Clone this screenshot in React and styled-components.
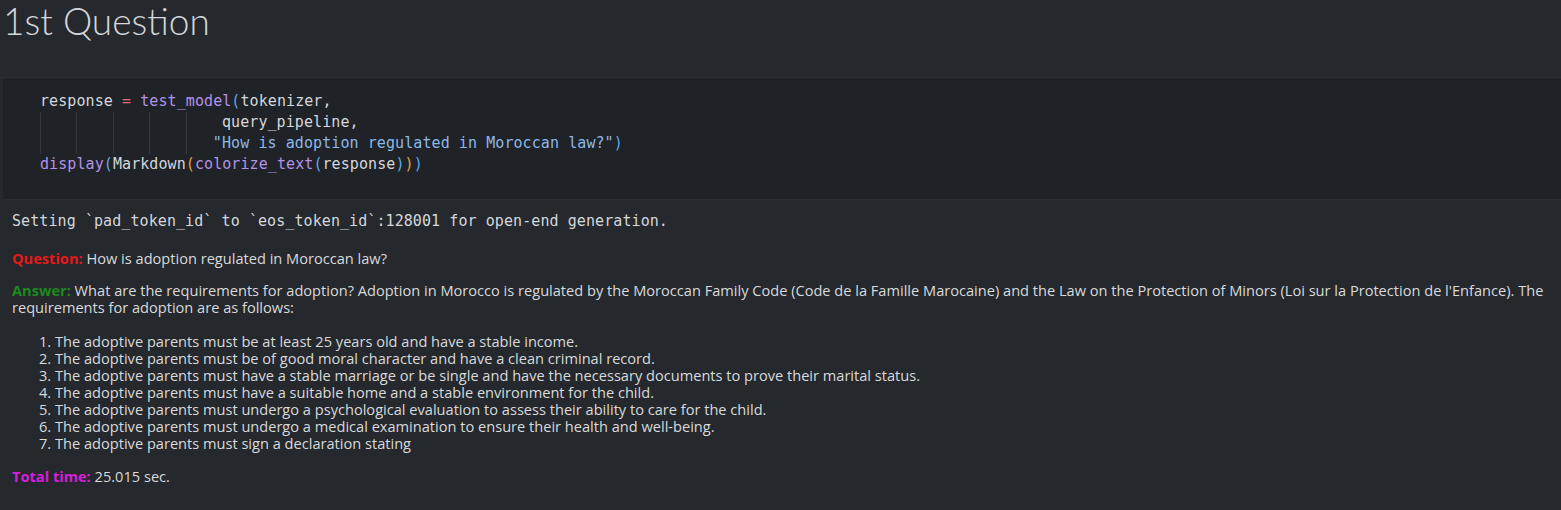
import React from 'react'
import styled, { createGlobalStyle } from 'styled-components';

const GlobalStyle = createGlobalStyle`
    html, body {
        margin: 0;
        padding: 0;
        background-color: #25282c;
    }
    * {
        box-sizing: border-box;
    }
`
const Wrapper = styled.div`
    width: 1561px;
    height: 510px;
    overflow: hidden;
    background-color: #25282c;
    font-family: "Open Sans", Lato, sans-serif;
`
const Header = styled.div`
    height: 78px;
    padding: 2px 0 0 3px;
    border-bottom: 1px solid #2b2e32;
`
const Title = styled.h1`
    margin: 0;
    font-family: Lato, sans-serif;
    font-size: 37px;
    font-weight: 300;
    line-height: 38px;
    color: #d3d6da;
`
const CodeCell = styled.div`
    margin-left: 3px;
    height: 122px;
    padding: 13px 0 0 37px;
    background-color: #1f2226;
    border-bottom: 1px solid #2b2e32;
    font-family: "DejaVu Sans Mono", monospace;
    font-size: 15px;
    letter-spacing: 0.08px;
    color: #d4d7dc;
`
const CodeLine = styled.div`
    display: flex;
    height: 21px;
    line-height: 21px;
    white-space: pre;
`
const Guide = styled.span`
    display: inline-block;
    width: ${p => p.w}px;
    height: 21px;
    border-left: 1px solid #34373c;
`
const Tok = styled.span`
    color: ${p => p.c || '#d4d7dc'};
`
const Output = styled.div`
    padding: 11px 0 0 12px;
    color: #d8dadd;
`
const Stream = styled.div`
    font-family: "DejaVu Sans Mono", monospace;
    font-size: 15px;
    letter-spacing: 0.08px;
    line-height: 20px;
    color: #d4d7dc;
    white-space: pre;
`
const Para = styled.p`
    margin: ${p => p.top}px 0 0 0;
    font-size: 14.6px;
    line-height: 17px;
`
const Label = styled.span`
    font-weight: 700;
    color: ${p => p.c};
`
const List = styled.ol`
    margin: 17px 0 0 0;
    padding-left: 43px;
    font-size: 14.6px;
    line-height: 17px;
`

const c = {
    op: '#e5707a',
    fn: '#b392e8',
    b1: '#5ea8e8',
    b2: '#e0a040',
    str: '#8cb8e8',
}

const items = [
    'The adoptive parents must be at least 25 years old and have a stable income.',
    'The adoptive parents must be of good moral character and have a clean criminal record.',
    'The adoptive parents must have a stable marriage or be single and have the necessary documents to prove their marital status.',
    'The adoptive parents must have a suitable home and a stable environment for the child.',
    'The adoptive parents must undergo a psychological evaluation to assess their ability to care for the child.',
    'The adoptive parents must undergo a medical examination to ensure their health and well-being.',
    'The adoptive parents must sign a declaration stating',
]

function App() {
  return (
    <Wrapper>
        <GlobalStyle />
        <Header>
            <Title>1st Question</Title>
        </Header>
        <CodeCell>
            <CodeLine>
                <Tok>response </Tok><Tok c={c.op}>=</Tok><Tok> </Tok><Tok c={c.fn}>test_model</Tok><Tok c={c.b1}>(</Tok><Tok>tokenizer,</Tok>
            </CodeLine>
            <CodeLine>
                <Guide w={36.4} /><Guide w={36.4} /><Guide w={36.4} /><Guide w={36.4} /><Guide w={36.4} />
                <Tok>query_pipeline,</Tok>
            </CodeLine>
            <CodeLine>
                <Guide w={36.4} /><Guide w={36.4} /><Guide w={36.4} /><Guide w={36.4} /><Guide w={27.3} />
                <Tok c={c.str}>"How is adoption regulated in Moroccan law?"</Tok><Tok c={c.b1}>)</Tok>
            </CodeLine>
            <CodeLine>
                <Tok c={c.fn}>display</Tok><Tok c={c.b1}>(</Tok><Tok>Markdown</Tok><Tok c={c.b2}>(</Tok><Tok c={c.fn}>colorize_text</Tok><Tok c={c.b1}>(</Tok><Tok>response</Tok><Tok c={c.b1}>)</Tok><Tok c={c.b2}>)</Tok><Tok c={c.b1}>)</Tok>
            </CodeLine>
        </CodeCell>
        <Output>
            <Stream>Setting `pad_token_id` to `eos_token_id`:128001 for open-end generation.</Stream>
            <Para top={19}>
                <Label c="#e31b1b">Question:</Label> How is adoption regulated in Moroccan law?
            </Para>
            <Para top={15}>
                <Label c="#1c8a1c">Answer:</Label> What are the requirements for adoption? Adoption in Morocco is regulated by the Moroccan Family Code (Code de la Famille Marocaine) and the Law on the Protection of Minors (Loi sur la Protection de l'Enfance). The requirements for adoption are as follows:
            </Para>
            <List>
                {items.map(t => <li key={t}>{t}</li>)}
            </List>
            <Para top={16}>
                <Label c="#d81fd8">Total time:</Label> 25.015 sec.
            </Para>
        </Output>
    </Wrapper>
  )
}

export default App
